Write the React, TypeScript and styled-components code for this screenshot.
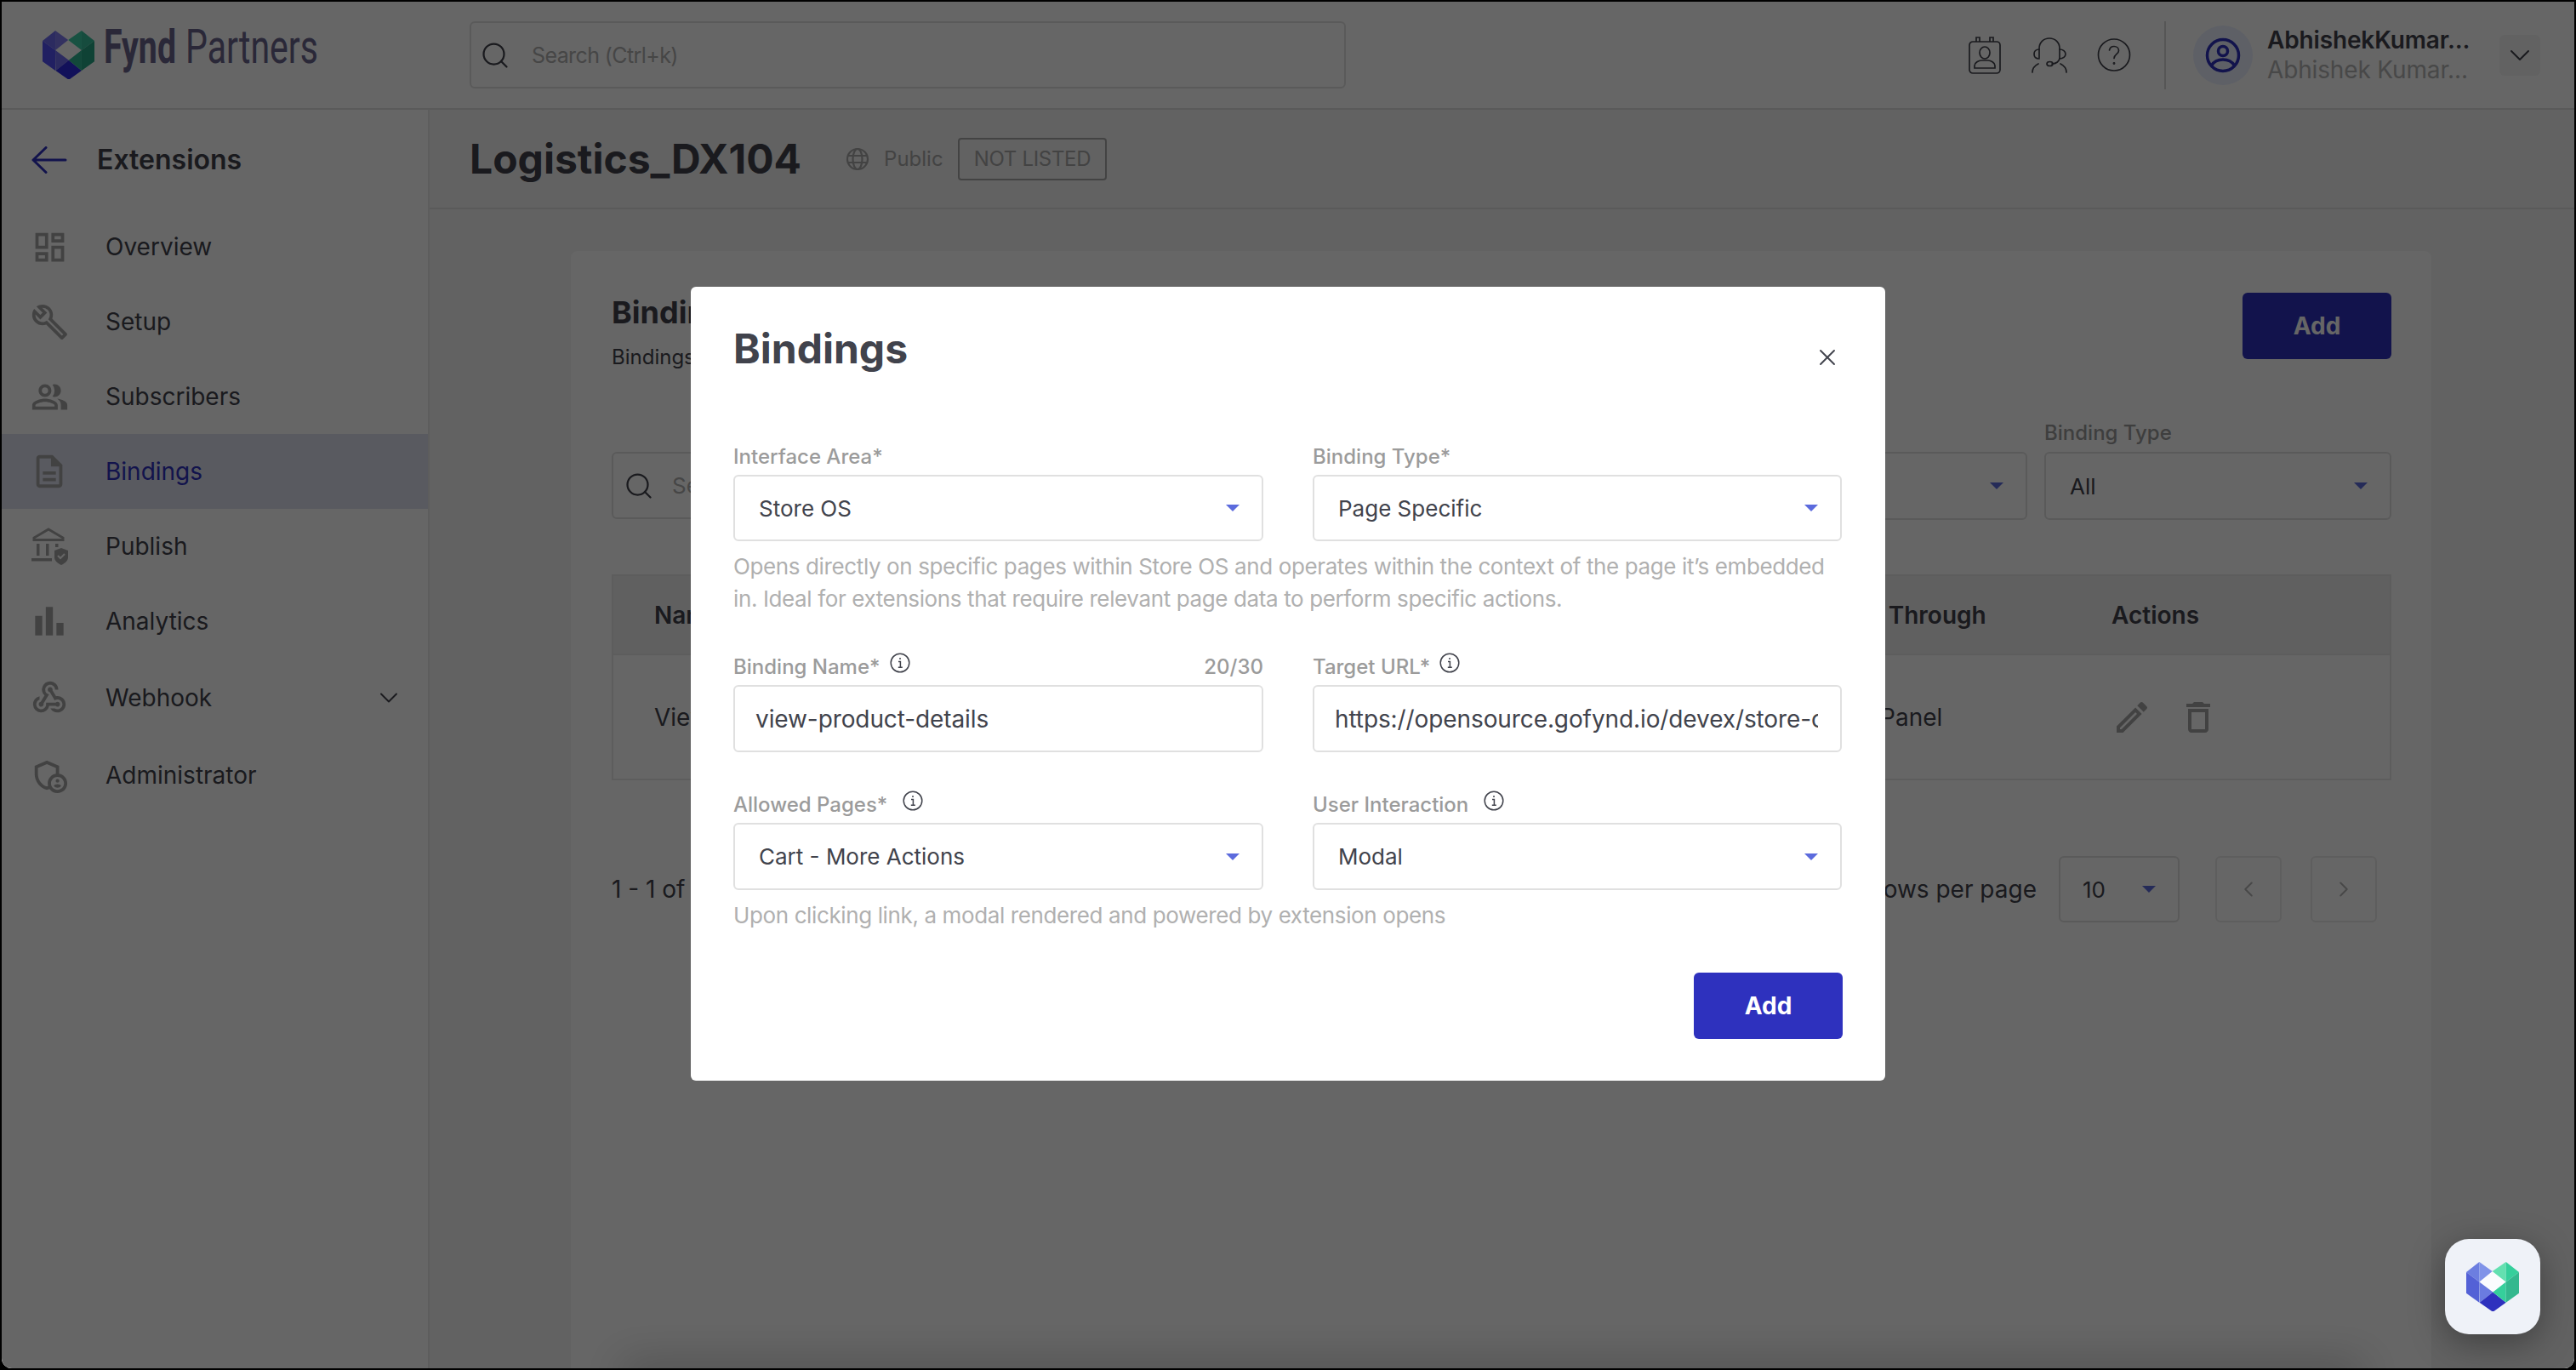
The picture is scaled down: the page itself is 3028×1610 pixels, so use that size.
import React from 'react';
import styled, { createGlobalStyle } from 'styled-components';
import { ChevronDown, ChevronLeft, ChevronRight, Search, X } from 'lucide-react';
import {
  MdBarChart,
  MdOutlineAdminPanelSettings,
  MdOutlineBuild,
  MdOutlineDashboard,
  MdOutlineDelete,
  MdOutlineDescription,
  MdOutlineEdit,
  MdOutlinePeopleAlt,
  MdWebhook,
} from 'react-icons/md';

const GlobalStyle = createGlobalStyle`
  html, body { margin: 0; padding: 0; background: #000; }
  * { box-sizing: border-box; }
  body { font-family: Inter, "Noto Sans", sans-serif; color: #41434c; }
`;

type HeartColors = {
  topLeft: string;
  topInner: string;
  left: string;
  middle: string;
  bottom: string;
  rightTopInner: string;
  rightTop: string;
  rightMiddle: string;
  right: string;
  hole?: string;
};

const headerHeart: HeartColors = {
  topLeft: '#6f6cf0',
  topInner: '#7f7cf0',
  left: '#5450f5',
  middle: '#6f6cf0',
  bottom: '#2e2ce0',
  rightTopInner: '#3ccda6',
  rightTop: '#38bf9c',
  rightMiddle: '#2fb592',
  right: '#26a584',
};

const widgetHeart: HeartColors = {
  topLeft: '#6c7ee0',
  topInner: '#8093e8',
  left: '#5361d6',
  middle: '#6a7be0',
  bottom: '#2e31be',
  rightTopInner: '#63e0b0',
  rightTop: '#35cf9b',
  rightMiddle: '#35cf9b',
  right: '#33b88e',
  hole: '#fbfcfe',
};

function Heart({ colors, size }: { colors: HeartColors; size: number }) {
  return (
    <svg width={size} height={size * 0.95} viewBox="0 0 186 176">
      {colors.hole && <polygon fill={colors.hole} points="92,33 140,70 94,106 46,70" />}
      <polygon fill={colors.topLeft} points="46,0 0,36 46,70" />
      <polygon fill={colors.topInner} points="46,0 92,33 46,70" />
      <polygon fill={colors.left} points="0,36 46,70 46,143 0,110" />
      <polygon fill={colors.middle} points="46,70 94,106 47,143" />
      <polygon fill={colors.bottom} points="94,106 140,143 94,176 47,143" />
      <polygon fill={colors.rightTopInner} points="92,33 140,0 140,70" />
      <polygon fill={colors.rightTop} points="140,0 186,36 140,70" />
      <polygon fill={colors.rightMiddle} points="140,70 94,106 140,143" />
      <polygon fill={colors.right} points="140,70 186,36 186,110 140,143" />
    </svg>
  );
}

function LogoWord() {
  return (
    <svg width="252" height="70" viewBox="0 0 252 70" overflow="visible">
      <text x="0" y="44" fontFamily="Roboto, sans-serif" fontSize="56" fontWeight="700" fill="#69648c" textLength="85" lengthAdjust="spacingAndGlyphs">
        Fynd
      </text>
      <text x="96" y="44" fontFamily="Roboto, sans-serif" fontSize="56" fontWeight="400" fill="#69648c" textLength="156" lengthAdjust="spacingAndGlyphs">
        Partners
      </text>
    </svg>
  );
}

function BackArrow() {
  return (
    <svg width="42" height="32" viewBox="0 0 42 32" fill="none" stroke="#2e31be" strokeWidth="3" strokeLinecap="round" strokeLinejoin="round">
      <path d="M40 16H2M17 1.5 2 16l15 14.5" />
    </svg>
  );
}

function PublishIcon() {
  return (
    <svg width="43" height="44" viewBox="0 0 43 44" fill="none">
      <path d="M20 2 37 12v2.5H3V12Z" stroke="#a6a6a6" strokeWidth="3" />
      <rect x="6" y="19" width="3.5" height="14" fill="#a6a6a6" />
      <rect x="17" y="19" width="3.5" height="14" fill="#a6a6a6" />
      <rect x="28" y="19" width="3.5" height="4" fill="#a6a6a6" />
      <rect x="0" y="36" width="24" height="3.5" fill="#a6a6a6" />
      <path d="M35 24l8 3v8c0 4-3.5 7-8 9-4.5-2-8-5-8-9v-8Z" fill="#a6a6a6" />
      <path d="M31 33l3 3 5-5" stroke="#fff" strokeWidth="2" />
    </svg>
  );
}

function ContactBookIcon() {
  return (
    <svg width="40" height="44" viewBox="0 0 40 44" fill="none" stroke="#41434c" strokeWidth="1.700">
      <rect x="2" y="6" width="36" height="37" rx="4" />
      <path d="M10 6V1h4v5M26 6V1h4v5" />
      <ellipse cx="20" cy="19" rx="6" ry="7" />
      <path d="M8 37v-3c0-3.500 5-6 8-6h8c3 0 8 2.500 8 6v3Z" />
    </svg>
  );
}

function HeadsetIcon() {
  return (
    <svg width="42" height="42" viewBox="0 0 42 42" fill="none" stroke="#41434c" strokeWidth="1.700" strokeLinecap="round">
      <path d="M9 24V13C9 6 14 1 21 1s12 5 12 12v11c0 4-4 7-9 7" />
      <path d="M9 14c-4 0-6 2.500-6 5.500S5 25 9 25M33 14c4 0 7 2.500 7 5.500S37 25 33 25" />
      <ellipse cx="21.500" cy="31" rx="3.500" ry="2.500" />
      <path d="M1 41c0-5 3-8 7-10M41 41c0-5-3-8-7-10" />
    </svg>
  );
}

function HelpIcon() {
  return (
    <svg width="40" height="41" viewBox="0 0 40 41" fill="none" stroke="#41434c" strokeWidth="1.700" strokeLinecap="round">
      <circle cx="20" cy="20.500" r="18.500" />
      <path d="M14.500 15c.5-3 2.800-4.500 5.500-4.500 3 0 5.500 2 5.500 5 0 4-5.500 4.500-5.500 9" />
      <circle cx="20" cy="30.500" r="0.600" />
    </svg>
  );
}

function AvatarIcon() {
  return (
    <svg width="42" height="42" viewBox="0 0 42 42" fill="none" stroke="#2e31be" strokeWidth="3.500">
      <circle cx="21" cy="21" r="18.500" />
      <circle cx="21" cy="16" r="5.500" />
      <path d="M7.500 33c3-5 8-7 13.500-7s10.500 2 13.500 7" />
    </svg>
  );
}

function GlobeIcon() {
  return (
    <svg width="28" height="28" viewBox="0 0 28 28" fill="none" stroke="#a8a8a8" strokeWidth="2.200">
      <circle cx="14" cy="14" r="12" />
      <ellipse cx="14" cy="14" rx="5.500" ry="12" />
      <path d="M3 10h22M3 18h22" />
    </svg>
  );
}

function InfoIcon() {
  return (
    <svg width="24" height="24" viewBox="0 0 24 24" fill="none" stroke="#41434c">
      <circle cx="12" cy="12" r="10.800" strokeWidth="1.500" />
      <path d="M10 10.500h2.400V17M9.800 17.200h5" strokeWidth="1.500" />
      <circle cx="12" cy="7" r="1" fill="#41434c" stroke="none" />
    </svg>
  );
}

const Page = styled.div`
  position: relative;
  margin: 2px;
  height: calc(100vh - 4px);
  display: flex;
  flex-direction: column;
  overflow: hidden;
  background: #fff;
  border-radius: 0 0 12px 12px;
`;

const Header = styled.header`
  flex: 0 0 127px;
  display: flex;
  align-items: center;
  padding: 0 40px 0 48px;
  background: #fff;
  border-bottom: 2px solid #e0e0e0;
`;

const Brand = styled.div`
  width: 502px;
  display: flex;
  align-items: center;
  gap: 11px;
`;

const GlobalSearch = styled.div`
  width: 1030px;
  height: 79px;
  display: flex;
  align-items: center;
  gap: 25px;
  padding-left: 10px;
  border: 2px solid #e0e0e0;
  border-radius: 6px;
  font-size: 25px;
  letter-spacing: -0.6px;
  color: #b0b0b0;
`;

const HeaderRight = styled.div`
  margin-left: auto;
  display: flex;
  align-items: center;
`;

const HeaderIcons = styled.div`
  display: flex;
  align-items: center;
  gap: 35px;
  padding-right: 39px;
  height: 80px;
  border-right: 2px solid #d8d8d8;
`;

const AvatarCircle = styled.div`
  width: 70px;
  height: 70px;
  margin: 0 17px 0 32px;
  display: flex;
  align-items: center;
  justify-content: center;
  border-radius: 50%;
  background: #eaf0fe;
`;

const UserBlock = styled.div`
  width: 240px;
  font-size: 28px;
  line-height: 35px;
  letter-spacing: -0.15px;
`;

const UserName = styled.div`
  font-weight: 600;
`;

const UserOrg = styled.div`
  color: #b4b4b4;
`;

const UserToggle = styled.div`
  width: 48px;
  height: 48px;
  margin-left: 33px;
  display: flex;
  align-items: center;
  justify-content: center;
  border-radius: 6px;
  background: #f5f5f5;
`;

const Body = styled.div`
  flex: 1;
  min-height: 0;
  display: flex;
`;

const Sidebar = styled.aside`
  flex: 0 0 503px;
  background: #fff;
  border-right: 2px solid #e8e8e8;
`;

const SideTitle = styled.div`
  height: 117px;
  display: flex;
  align-items: center;
  gap: 35px;
  padding-left: 35px;
  font-size: 32px;
  font-weight: 600;
`;

const SideList = styled.nav`
  padding-top: 0;
`;

const SideItem = styled.div<{ $active?: boolean; $extra?: number }>`
  position: relative;
  height: 88px;
  margin-top: ${(p) => p.$extra ?? 0}px;
  display: flex;
  align-items: center;
  padding-left: 122px;
  font-size: 28px;
  color: ${(p) => (p.$active ? '#2e31be' : '#41434c')};
  background: ${(p) => (p.$active ? '#dfe2f0' : 'transparent')};
`;

const SideIcon = styled.span`
  position: absolute;
  left: 10px;
  top: 0;
  bottom: 0;
  width: 92px;
  display: flex;
  align-items: center;
  justify-content: center;
  color: #a6a6a6;
`;

const SideCaret = styled.span`
  position: absolute;
  right: 28px;
  display: flex;
  color: #41434c;
`;

const Main = styled.main`
  flex: 1;
  min-width: 0;
  display: flex;
  flex-direction: column;
  background: #f5f5f5;
`;

const TitleBar = styled.div`
  flex: 0 0 117px;
  display: flex;
  align-items: center;
  padding-left: 47px;
  background: #f5f5f5;
  border-bottom: 2px solid #e0e0e0;
`;

const PageTitle = styled.h1`
  margin: 0 52px 0 0;
  font-size: 48px;
  font-weight: 700;
`;

const Visibility = styled.span`
  display: flex;
  align-items: center;
  gap: 17px;
  font-size: 24px;
  color: #a8a8a8;
`;

const Badge = styled.span`
  height: 50px;
  margin-left: 17px;
  padding: 0 17px;
  display: flex;
  align-items: center;
  border: 2px solid #a8a8a8;
  border-radius: 4px;
  font-size: 24px;
  letter-spacing: -0.3px;
  color: #a8a8a8;
`;

const Content = styled.div`
  flex: 1;
  min-height: 0;
  padding: 49px 168px 0 166px;
`;

const Card = styled.section`
  position: relative;
  height: 100%;
  padding: 49px 47px 0 48px;
  background: #fff;
  border-radius: 8px 8px 0 0;

  &::after {
    content: '';
    position: absolute;
    left: 60px;
    right: 80px;
    bottom: -30px;
    height: 30px;
    box-shadow: 0 -6px 50px rgba(0, 0, 0, 0.25);
  }
`;

const CardHead = styled.div`
  display: flex;
  justify-content: space-between;
  align-items: flex-start;
`;

const CardTitle = styled.h2`
  margin: 0;
  font-size: 36px;
  line-height: 46px;
  font-weight: 700;
`;

const CardSub = styled.p`
  margin: 14px 0 0;
  font-size: 24px;
  line-height: 32px;
`;

const PrimaryButton = styled.button`
  width: 175px;
  height: 78px;
  border: 0;
  border-radius: 6px;
  background: #2e31be;
  color: #fff;
  font: 700 28px Inter, sans-serif;
`;

const Filters = styled.div`
  margin-top: 57px;
  display: flex;
  align-items: flex-end;
  gap: 20px;
`;

const FilterSearch = styled.div`
  flex: 1;
  height: 79px;
  margin-bottom: 1px;
  display: flex;
  align-items: center;
  gap: 21px;
  padding-left: 12px;
  border: 2px solid #e0e0e0;
  border-radius: 6px;
  font-size: 26px;
  color: #b0b0b0;
`;

const FilterField = styled.div`
  width: 408px;
`;

const FilterLabel = styled.div`
  margin-bottom: 6px;
  font-size: 24px;
  line-height: 32px;
  font-weight: 500;
  color: #9b9b9b;
`;

const Select = styled.div<{ $height?: number; $pad?: number }>`
  height: ${(p) => p.$height ?? 79}px;
  display: flex;
  align-items: center;
  justify-content: space-between;
  padding: 0 26px 0 ${(p) => p.$pad ?? 28}px;
  border: 2px solid #e0e0e0;
  border-radius: 6px;
  background: #fff;
  font-size: 26px;
`;

const Caret = styled.span`
  width: 0;
  height: 0;
  border-left: 8px solid transparent;
  border-right: 8px solid transparent;
  border-top: 8px solid #5c6bdd;
`;

const Table = styled.div`
  margin-top: 64px;
  border: 2px solid #e8e8e8;
`;

const TableRow = styled.div<{ $head?: boolean }>`
  height: ${(p) => (p.$head ? 93 : 145)}px;
  display: grid;
  grid-template-columns: 679px 740px 342px 1fr;
  align-items: center;
  font-size: 28px;
  font-weight: ${(p) => (p.$head ? 600 : 400)};
  background: ${(p) => (p.$head ? '#f0f0f0' : '#fff')};
  border-bottom: ${(p) => (p.$head ? '2px solid #e8e8e8' : '0')};
`;

const NameCell = styled.div`
  padding-left: 48px;
`;

const ThroughValue = styled.div`
  padding-left: 4px;
`;

const ActionCell = styled.div`
  display: flex;
  gap: 30px;
  color: #a6a6a6;
`;

const Pager = styled.div`
  margin-top: 89px;
  padding-right: 17px;
  display: flex;
  align-items: center;
  justify-content: space-between;
  font-size: 28px;
`;

const PagerRight = styled.div`
  display: flex;
  align-items: center;
`;

const RowsSelect = styled.div`
  width: 142px;
  margin: 0 42px 0 26px;
`;

const PageButton = styled.div`
  width: 78px;
  height: 78px;
  display: flex;
  align-items: center;
  justify-content: center;
  border: 2px solid #ececec;
  border-radius: 6px;
  color: #b4b4b4;

  & + & {
    margin-left: 34px;
  }
`;

const Overlay = styled.div`
  position: absolute;
  inset: 0;
  display: flex;
  align-items: center;
  justify-content: center;
  padding-bottom: 3px;
  background: rgba(0, 0, 0, 0.6);
`;

const Modal = styled.div`
  width: 1404px;
  height: 933px;
  padding: 41px 50px 0 50px;
  background: #fff;
  border-radius: 6px;
`;

const ModalHead = styled.div`
  height: 142px;
  display: flex;
  justify-content: space-between;
  align-items: flex-start;
`;

const ModalTitle = styled.h2`
  margin: 0;
  font-size: 48px;
  line-height: 64px;
  font-weight: 700;
`;

const CloseButton = styled.span`
  display: flex;
  margin: 26px 2px 0 0;
  color: #41434c;
`;

const FormGrid = styled.div`
  display: grid;
  grid-template-columns: 623px 622px;
  column-gap: 58px;
`;

const Field = styled.div<{ $top?: number }>`
  margin-top: ${(p) => p.$top ?? 0}px;
  min-width: 0;
`;

const LabelRow = styled.div`
  height: 32px;
  margin-bottom: 6px;
  display: flex;
  align-items: center;
  font-size: 24px;
  font-weight: 500;
  color: #9b9b9b;
`;

const InfoWrap = styled.span<{ $gap?: number }>`
  display: flex;
  margin: -8px 0 0 ${(p) => p.$gap ?? 11}px;
`;

const Counter = styled.span`
  margin-left: auto;
`;

const TextBox = styled.div`
  height: 79px;
  padding: 0 26px 0 24px;
  display: flex;
  align-items: center;
  border: 2px solid #e0e0e0;
  border-radius: 6px;
  font-size: 28px;
`;

const TextValue = styled.span`
  flex: 1;
  overflow: hidden;
  white-space: nowrap;
  letter-spacing: -0.1px;
`;

const HelpText = styled.p`
  grid-column: 1 / -1;
  margin: 11px 0 0;
  font-size: 26px;
  line-height: 38px;
  letter-spacing: -0.38px;
  color: #b0b0b0;
`;

const ModalFoot = styled.div`
  margin-top: 48px;
  display: flex;
  justify-content: flex-end;
`;

const ChatWidget = styled.div`
  position: absolute;
  right: 40px;
  bottom: 40px;
  width: 112px;
  height: 112px;
  display: flex;
  align-items: center;
  justify-content: center;
  border-radius: 28px;
  background: #eff2f8;
  box-shadow: 0 10px 40px rgba(0, 0, 0, 0.35);
`;

const navItems = [
  { label: 'Overview', icon: <MdOutlineDashboard size={45} /> },
  { label: 'Setup', icon: <MdOutlineBuild size={45} /> },
  { label: 'Subscribers', icon: <MdOutlinePeopleAlt size={45} /> },
  { label: 'Bindings', icon: <MdOutlineDescription size={46} />, active: true },
  { label: 'Publish', icon: <PublishIcon /> },
  { label: 'Analytics', icon: <MdBarChart size={50} /> },
  { label: 'Webhook', icon: <MdWebhook size={46} />, caret: true, extra: 2 },
  { label: 'Administrator', icon: <MdOutlineAdminPanelSettings size={46} />, extra: 3 },
];

export default function App() {
  return (
    <>
      <GlobalStyle />
      <Page>
        <Header>
          <Brand>
            <Heart colors={headerHeart} size={61} />
            <LogoWord />
          </Brand>
          <GlobalSearch>
            <Search size={36} strokeWidth={1.5} color="#41434c" />
            Search (Ctrl+k)
          </GlobalSearch>
          <HeaderRight>
            <HeaderIcons>
              <ContactBookIcon />
              <HeadsetIcon />
              <HelpIcon />
            </HeaderIcons>
            <AvatarCircle>
              <AvatarIcon />
            </AvatarCircle>
            <UserBlock>
              <UserName>AbhishekKumar...</UserName>
              <UserOrg>Abhishek Kumar...</UserOrg>
            </UserBlock>
            <UserToggle>
              <ChevronDown size={40} strokeWidth={1.2} color="#41434c" />
            </UserToggle>
          </HeaderRight>
        </Header>
        <Body>
          <Sidebar>
            <SideTitle>
              <BackArrow />
              Extensions
            </SideTitle>
            <SideList>
              {navItems.map((item) => (
                <SideItem key={item.label} $active={item.active} $extra={item.extra}>
                  <SideIcon>{item.icon}</SideIcon>
                  {item.label}
                  {item.caret && (
                    <SideCaret>
                      <ChevronDown size={36} strokeWidth={1.3} />
                    </SideCaret>
                  )}
                </SideItem>
              ))}
            </SideList>
          </Sidebar>
          <Main>
            <TitleBar>
              <PageTitle>Logistics_DX104</PageTitle>
              <Visibility>
                <GlobeIcon />
                Public
              </Visibility>
              <Badge>NOT LISTED</Badge>
            </TitleBar>
            <Content>
              <Card>
                <CardHead>
                  <div>
                    <CardTitle>Bindings</CardTitle>
                    <CardSub>Bindings are the entry points of the extension</CardSub>
                  </div>
                  <PrimaryButton>Add</PrimaryButton>
                </CardHead>
                <Filters>
                  <FilterSearch>
                    <Search size={36} strokeWidth={1.5} color="#41434c" />
                    Search
                  </FilterSearch>
                  <FilterField>
                    <FilterLabel>Interface Area</FilterLabel>
                    <Select $height={80}>
                      All
                      <Caret />
                    </Select>
                  </FilterField>
                  <FilterField>
                    <FilterLabel>Binding Type</FilterLabel>
                    <Select $height={80}>
                      All
                      <Caret />
                    </Select>
                  </FilterField>
                </Filters>
                <Table>
                  <TableRow $head>
                    <NameCell>Name</NameCell>
                    <div>Interface Area</div>
                    <div>Open Through</div>
                    <div>Actions</div>
                  </TableRow>
                  <TableRow>
                    <NameCell>View product details</NameCell>
                    <div>Store OS</div>
                    <ThroughValue>Side Panel</ThroughValue>
                    <ActionCell>
                      <MdOutlineEdit size={48} />
                      <MdOutlineDelete size={48} />
                    </ActionCell>
                  </TableRow>
                </Table>
                <Pager>
                  <div>1 - 1 of 1</div>
                  <PagerRight>
                    Rows per page
                    <RowsSelect>
                      <Select $height={78} $pad={26}>
                        10
                        <Caret />
                      </Select>
                    </RowsSelect>
                    <PageButton>
                      <ChevronLeft size={30} strokeWidth={1.6} />
                    </PageButton>
                    <PageButton>
                      <ChevronRight size={30} strokeWidth={1.6} />
                    </PageButton>
                  </PagerRight>
                </Pager>
              </Card>
            </Content>
          </Main>
        </Body>
        <Overlay>
          <Modal>
            <ModalHead>
              <ModalTitle>Bindings</ModalTitle>
              <CloseButton>
                <X size={32} strokeWidth={1.4} />
              </CloseButton>
            </ModalHead>
            <FormGrid>
              <Field>
                <LabelRow>Interface Area*</LabelRow>
                <Select $height={78}>
                  Store OS
                  <Caret />
                </Select>
              </Field>
              <Field>
                <LabelRow>Binding Type*</LabelRow>
                <Select $height={78}>
                  Page Specific
                  <Caret />
                </Select>
              </Field>
              <HelpText>
                Opens directly on specific pages within Store OS and operates within the context of the page it’s embedded in. Ideal for extensions that require relevant page data to perform specific actions.
              </HelpText>
              <Field $top={44}>
                <LabelRow>
                  Binding Name*
                  <InfoWrap>
                    <InfoIcon />
                  </InfoWrap>
                  <Counter>20/30</Counter>
                </LabelRow>
                <TextBox>
                  <TextValue>view-product-details</TextValue>
                </TextBox>
              </Field>
              <Field $top={44}>
                <LabelRow>
                  Target URL*
                  <InfoWrap>
                    <InfoIcon />
                  </InfoWrap>
                </LabelRow>
                <TextBox>
                  <TextValue>https://opensource.gofynd.io/devex/store-os</TextValue>
                </TextBox>
              </Field>
              <Field $top={45}>
                <LabelRow>
                  Allowed Pages*
                  <InfoWrap $gap={18}>
                    <InfoIcon />
                  </InfoWrap>
                </LabelRow>
                <Select>
                  Cart - More Actions
                  <Caret />
                </Select>
              </Field>
              <Field $top={45}>
                <LabelRow>
                  User Interaction
                  <InfoWrap $gap={18}>
                    <InfoIcon />
                  </InfoWrap>
                </LabelRow>
                <Select>
                  Modal
                  <Caret />
                </Select>
              </Field>
              <HelpText>Upon clicking link, a modal rendered and powered by extension opens</HelpText>
            </FormGrid>
            <ModalFoot>
              <PrimaryButton>Add</PrimaryButton>
            </ModalFoot>
          </Modal>
        </Overlay>
        <ChatWidget>
          <Heart colors={widgetHeart} size={62} />
        </ChatWidget>
      </Page>
    </>
  );
}
